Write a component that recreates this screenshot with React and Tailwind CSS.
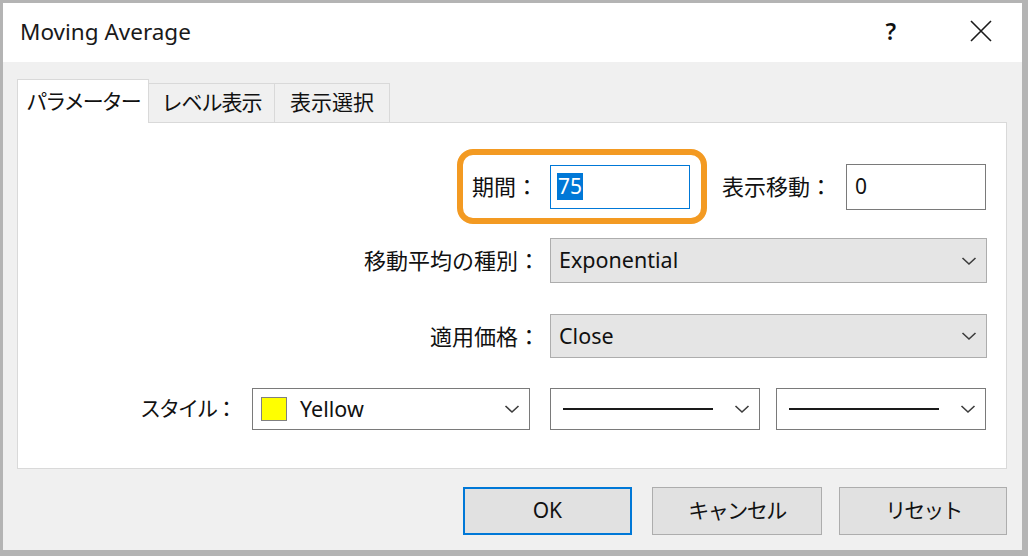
import React from "react";

const font = { fontFamily: '"Noto Sans", "Noto Sans CJK JP", sans-serif' };

const Chevron = ({ className = "" }) => (
  <svg width="16" height="10" viewBox="0 0 16 10" className={className}>
    <polyline points="1.5,2 8,8 14.5,2" fill="none" stroke="#3c3c3c" strokeWidth="1.6" />
  </svg>
);

const Select = ({ className, children, chevronClass = "mr-[9px]" }) => (
  <div className={"flex items-center justify-between " + className}>
    {children}
    <Chevron className={chevronClass} />
  </div>
);

const LineSelect = ({ width }) => (
  <div className={"flex items-center justify-between h-[42px] bg-white border border-[#7a7a7a] " + width}>
    <div className="ml-[12px] h-[2px] w-[150px] bg-[#1a1a1a]" />
    <Chevron className="mr-[9px]" />
  </div>
);

export default function App() {
  return (
    <div
      className="w-[1028px] h-[556px] bg-[#b4b4b4] pl-[3px] pt-[3px] pr-[6px] pb-[6px] text-[#111]"
      style={font}
    >
      <div className="w-full h-full flex flex-col">
        {/* title bar */}
        <div className="h-[59px] bg-white flex items-center justify-between shrink-0">
          <div className="ml-[17px] text-[22.5px] text-[#1a1a1a] pb-[2px]">Moving Average</div>
          <div className="flex items-center mr-[30px] pb-[3px]">
            <span className="text-[23px] font-semibold mr-[74px]">?</span>
            <svg width="22" height="22" viewBox="0 0 22 22">
              <path d="M1 1 L21 21 M21 1 L1 21" stroke="#1a1a1a" strokeWidth="1.6" />
            </svg>
          </div>
        </div>

        {/* body */}
        <div className="flex-1 bg-[#f0f0f0] flex flex-col pl-[14px] pr-[15px]">
          {/* tabs */}
          <div className="flex items-end mt-[17px] h-[43px]">
            <div className="w-[132px] h-[44px] -mb-px relative z-10 bg-white border border-b-0 border-[#d9d9d9] flex items-center justify-center text-[21px] tracking-[-2px]">
              パラメーター
            </div>
            <div className="w-[126px] h-[39px] bg-[#f0f0f0] border border-b-0 border-l-0 border-[#d9d9d9] flex items-center justify-center text-[21px] tracking-[-1px]">
              レベル表示
            </div>
            <div className="w-[115px] h-[39px] bg-[#f0f0f0] border border-b-0 border-l-0 border-[#d9d9d9] flex items-center justify-center text-[21px]">
              表示選択
            </div>
          </div>

          {/* panel */}
          <div className="h-[347px] bg-white border border-[#d9d9d9] flex flex-col pt-[26px] text-[22px]">
            {/* row 1 */}
            <div className="flex items-center">
              <div className="ml-[439px] w-[250px] h-[75px] border-[6px] border-[#f39a22] rounded-[16px] flex items-center pl-[9px]">
                <span className="w-[78px]">期間：</span>
                <div className="w-[140px] h-[44px] border border-[#0078d7] flex items-center pl-[6px]">
                  <span className="bg-[#0078d7] text-white leading-[27px] px-[1px] text-[21px]">75</span>
                </div>
              </div>
              <span className="ml-[15px] w-[124px]">表示移動：</span>
              <div className="w-[140px] h-[46px] border border-[#7a7a7a] flex items-center pl-[8px] text-[21px]">0</div>
            </div>

            {/* row 2 */}
            <div className="flex items-center mt-[14px]">
              <span className="w-[522px] text-right">移動平均の種別：</span>
              <Select className="ml-[10px] w-[437px] h-[45px] bg-[#e5e5e5] border border-[#adadad]">
                <span className="ml-[8px] text-[21.5px]">Exponential</span>
              </Select>
            </div>

            {/* row 3 */}
            <div className="flex items-center mt-[31px]">
              <span className="w-[522px] text-right">適用価格：</span>
              <Select className="ml-[10px] w-[437px] h-[44px] bg-[#e5e5e5] border border-[#adadad]">
                <span className="ml-[8px] text-[21.5px]">Close</span>
              </Select>
            </div>

            {/* row 4 */}
            <div className="flex items-center mt-[30px]">
              <span className="w-[217px] text-right text-[21px] tracking-[-2px]">スタイル：</span>
              <Select className="ml-[17px] w-[278px] h-[42px] bg-white border border-[#7a7a7a]">
                <div className="flex items-center">
                  <div className="ml-[8px] w-[26px] h-[24px] bg-[#ffff00] border border-[#808080]" />
                  <span className="ml-[13px] text-[21.5px]">Yellow</span>
                </div>
              </Select>
              <div className="ml-[20px]">
                <LineSelect width="w-[210px]" />
              </div>
              <div className="ml-[16px]">
                <LineSelect width="w-[210px]" />
              </div>
            </div>
          </div>

          {/* buttons */}
          <div className="flex mt-[18px] text-[21px]">
            <button className="ml-[446px] w-[169px] h-[48px] bg-[#e1e1e1] border-2 border-[#0078d7]">OK</button>
            <button className="ml-[20px] w-[171px] h-[48px] bg-[#e1e1e1] border border-[#adadad] tracking-[-1.5px]">キャンセル</button>
            <button className="ml-[17px] w-[168px] h-[48px] bg-[#e1e1e1] border border-[#adadad] tracking-[-2px]">リセット</button>
          </div>
        </div>
      </div>
    </div>
  );
}
